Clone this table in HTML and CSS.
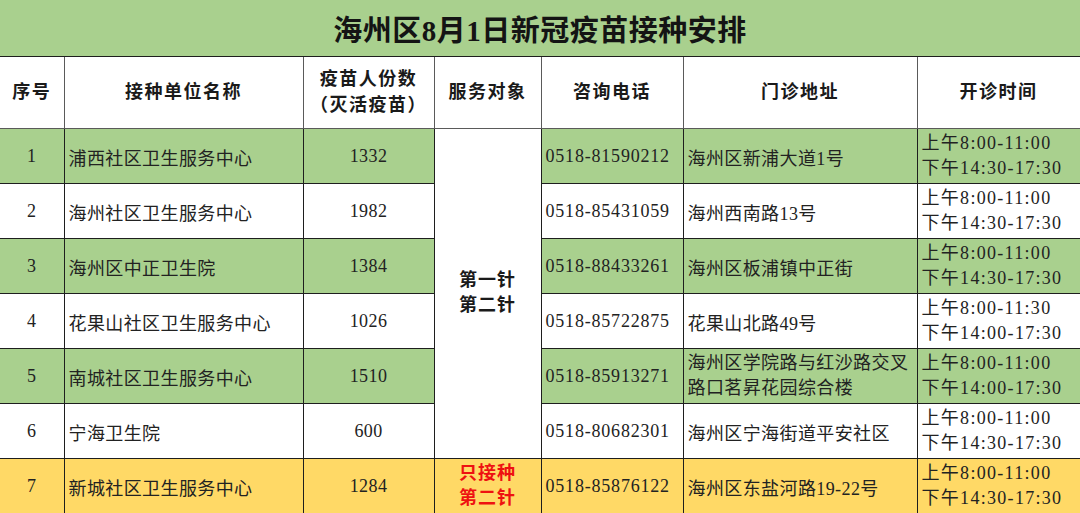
FILE: index.html
```html
<!DOCTYPE html>
<html lang="zh">
<head>
<meta charset="utf-8">
<title>海州区8月1日新冠疫苗接种安排</title>
<link rel="stylesheet" href="styles.css">
</head>
<body>
<table class="sched">
  <colgroup>
    <col class="c-no"><col class="c-name"><col class="c-count"><col class="c-target"><col class="c-phone"><col class="c-addr"><col class="c-time">
  </colgroup>
  <thead>
    <tr class="title-row"><th colspan="7" class="title">海州区8月1日新冠疫苗接种安排</th></tr>
    <tr class="head-row">
      <th>序号</th>
      <th>接种单位名称</th>
      <th>疫苗人份数<br>（灭活疫苗）</th>
      <th>服务对象</th>
      <th>咨询电话</th>
      <th>门诊地址</th>
      <th>开诊时间</th>
    </tr>
  </thead>
  <tbody>
    <tr class="row green">
      <td class="ctr">1</td>
      <td class="lft">浦西社区卫生服务中心</td>
      <td class="ctr">1332</td>
      <td rowspan="6" class="target">第一针<br>第二针</td>
      <td class="lft phone">0518-81590212</td>
      <td class="lft">海州区新浦大道1号</td>
      <td class="lft time">上午8:00-11:00<br>下午14:30-17:30</td>
    </tr>
    <tr class="row">
      <td class="ctr">2</td>
      <td class="lft">海州社区卫生服务中心</td>
      <td class="ctr">1982</td>
      <td class="lft phone">0518-85431059</td>
      <td class="lft">海州西南路13号</td>
      <td class="lft time">上午8:00-11:00<br>下午14:30-17:30</td>
    </tr>
    <tr class="row green">
      <td class="ctr">3</td>
      <td class="lft">海州区中正卫生院</td>
      <td class="ctr">1384</td>
      <td class="lft phone">0518-88433261</td>
      <td class="lft">海州区板浦镇中正街</td>
      <td class="lft time">上午8:00-11:00<br>下午14:30-17:30</td>
    </tr>
    <tr class="row">
      <td class="ctr">4</td>
      <td class="lft">花果山社区卫生服务中心</td>
      <td class="ctr">1026</td>
      <td class="lft phone">0518-85722875</td>
      <td class="lft">花果山北路49号</td>
      <td class="lft time">上午8:00-11:30<br>下午14:00-17:30</td>
    </tr>
    <tr class="row green">
      <td class="ctr">5</td>
      <td class="lft">南城社区卫生服务中心</td>
      <td class="ctr">1510</td>
      <td class="lft phone">0518-85913271</td>
      <td class="lft addr2">海州区学院路与红沙路交叉<br>路口茗昇花园综合楼</td>
      <td class="lft time">上午8:00-11:00<br>下午14:00-17:30</td>
    </tr>
    <tr class="row">
      <td class="ctr">6</td>
      <td class="lft">宁海卫生院</td>
      <td class="ctr">600</td>
      <td class="lft phone">0518-80682301</td>
      <td class="lft">海州区宁海街道平安社区</td>
      <td class="lft time">上午8:00-11:00<br>下午14:30-17:30</td>
    </tr>
    <tr class="row yellow">
      <td class="ctr">7</td>
      <td class="lft">新城社区卫生服务中心</td>
      <td class="ctr">1284</td>
      <td class="target red">只接种<br>第二针</td>
      <td class="lft phone">0518-85876122</td>
      <td class="lft">海州区东盐河路19-22号</td>
      <td class="lft time">上午8:00-11:00<br>下午14:30-17:30</td>
    </tr>
  </tbody>
</table>
</body>
</html>
```

FILE: styles.css
```css
html, body {
  margin: 0;
  padding: 0;
  background: #ffffff;
}

body {
  font-family: "Liberation Serif", "Noto Sans CJK SC", serif;
  color: #222222;
  width: 1080px;
  height: 513px;
  overflow: hidden;
}

.sched {
  width: 1080px;
  border-collapse: collapse;
  table-layout: fixed;
}

.c-no { width: 64px; }
.c-name { width: 239px; }
.c-count { width: 131px; }
.c-target { width: 107px; }
.c-phone { width: 142px; }
.c-addr { width: 234px; }
.c-time { width: 163px; }

.sched th,
.sched td {
  border: 1.5px solid #1e1e1e;
  padding: 0;
  vertical-align: middle;
}

.title-row {
  height: 56px;
}

.title {
  background: #a9d08e;
  font-size: 29px;
  font-weight: bold;
  letter-spacing: 0.5px;
  color: #141414;
  text-align: center;
  border-top: none !important;
  border-left: none !important;
  border-right: none !important;
  padding-top: 0;
}

.head-row {
  height: 72px;
}

.head-row th {
  background: #ffffff;
  font-size: 18px;
  font-weight: bold;
  letter-spacing: 1.5px;
  line-height: 26px;
  color: #1a1a1a;
  border-color: #5a5a5a;
  text-align: center;
}

.head-row th:first-child {
  border-left: none;
}

.row {
  height: 55px;
  font-size: 18px;
  letter-spacing: 0.4px;
}

.row td {
  padding-top: 2px;
}

.row td:first-child {
  border-left: none;
}

.row td:last-child {
  border-right: none;
}

.green td {
  background: #a9d08e;
}

.yellow td {
  background: #ffd966;
}

.ctr {
  text-align: center;
}

.lft {
  text-align: left;
  padding-left: 4px !important;
  white-space: nowrap;
}

.phone {
  letter-spacing: 0.8px;
}

.time {
  line-height: 25px;
  letter-spacing: 1.3px;
  padding-top: 0 !important;
}

.addr2 {
  line-height: 25px;
  padding-top: 0 !important;
}

.sched td.target {
  background: #ffffff;
  text-align: center;
  font-weight: bold;
  font-size: 18px;
  line-height: 25px;
  letter-spacing: 1px;
  color: #1a1a1a;
  padding-top: 0;
}

.yellow td.target {
  background: #ffd966;
}

.sched td.red {
  color: #ee1111;
}
```
